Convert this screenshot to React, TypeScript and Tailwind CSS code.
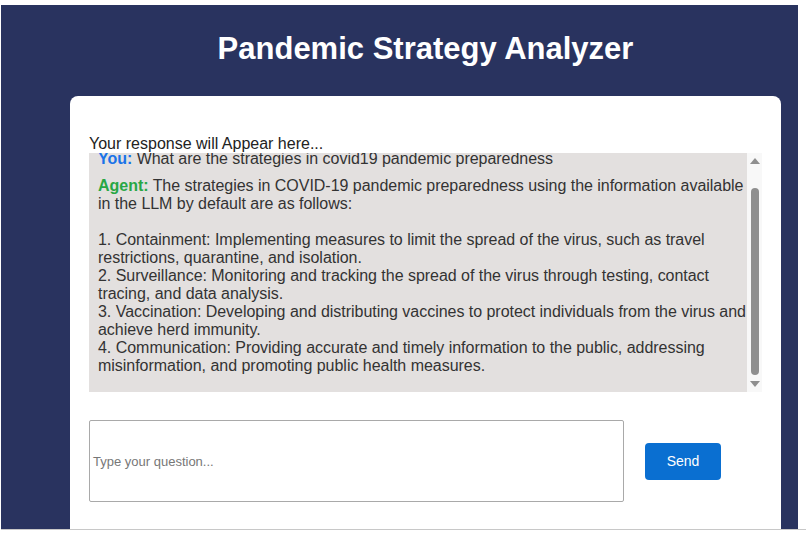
import { useEffect, useRef } from "react";

const answer = `The strategies in COVID-19 pandemic preparedness using the information available in the LLM by default are as follows:

1. Containment: Implementing measures to limit the spread of the virus, such as travel restrictions, quarantine, and isolation.
2. Surveillance: Monitoring and tracking the spread of the virus through testing, contact tracing, and data analysis.
3. Vaccination: Developing and distributing vaccines to protect individuals from the virus and achieve herd immunity.
4. Communication: Providing accurate and timely information to the public, addressing misinformation, and promoting public health measures.`;

const App = () => {
  const boxRef = useRef<HTMLDivElement>(null);

  useEffect(() => {
    if (boxRef.current) boxRef.current.scrollTop = 27;
  }, []);

  return (
    <div className="w-[806px] h-[534px] bg-white overflow-hidden pt-[5px] pl-[1px] font-['Liberation_Sans',Arial,sans-serif]">
      <div className="w-[797px] h-[524px] bg-[#29335f] pl-[69px] pr-[17px] overflow-hidden">
        <h1 className="h-[91px] flex items-center justify-center text-white font-bold text-[31px] pb-[2px]">
          Pandemic Strategy Analyzer
        </h1>

        <div className="bg-white rounded-[8px] h-[460px] pt-[39px] px-[19px]">
          <p className="text-[16px] leading-[18px] text-[#222]">Your response will Appear here...</p>

          <div className="flex h-[239px]">
            <div
              ref={boxRef}
              className="flex-1 overflow-hidden bg-[#e3e0df] py-[24px] pl-[9px] pr-0 text-[16px] leading-[18px] tracking-[-0.03px] text-[#333]"
            >
              <div className="mb-[9px]">
                <span className="font-bold text-[#1a73e8]">You:</span> What are the strategies in covid19 pandemic preparedness
              </div>
              <div className="whitespace-pre-wrap">
                <span className="font-bold text-[#28a745]">Agent:</span> {answer}
              </div>
            </div>

            {/* scrollbar */}
            <div className="w-[15px] bg-[#f8f8f8] flex flex-col items-center pt-[5px] pb-[5px]">
              <div className="w-0 h-0 border-l-[5px] border-r-[5px] border-b-[6px] border-l-transparent border-r-transparent border-b-[#8f8f8f]" />
              <div className="w-[8px] h-[187px] mt-[24px] rounded-full bg-[#8f8f8f]" />
              <div className="mt-auto w-0 h-0 border-l-[5px] border-r-[5px] border-t-[6px] border-l-transparent border-r-transparent border-t-[#8f8f8f]" />
            </div>
          </div>

          <div className="flex items-center mt-[28px]">
            <textarea
              className="w-[535px] h-[82px] border border-[#a9a9a9] rounded-[2px] px-[3px] pt-[33px] text-[13px] leading-[16px] text-[#333] placeholder:text-[#777] resize-none outline-none"
              placeholder="Type your question..."
            />
            <button className="ml-[21px] w-[76px] h-[37px] bg-[#0a6fd1] rounded-[4px] text-white text-[14px]">
              Send
            </button>
          </div>
        </div>
      </div>
      <div className="h-[1px] bg-[#c8c8c8]" />
    </div>
  );
};

export default App;
